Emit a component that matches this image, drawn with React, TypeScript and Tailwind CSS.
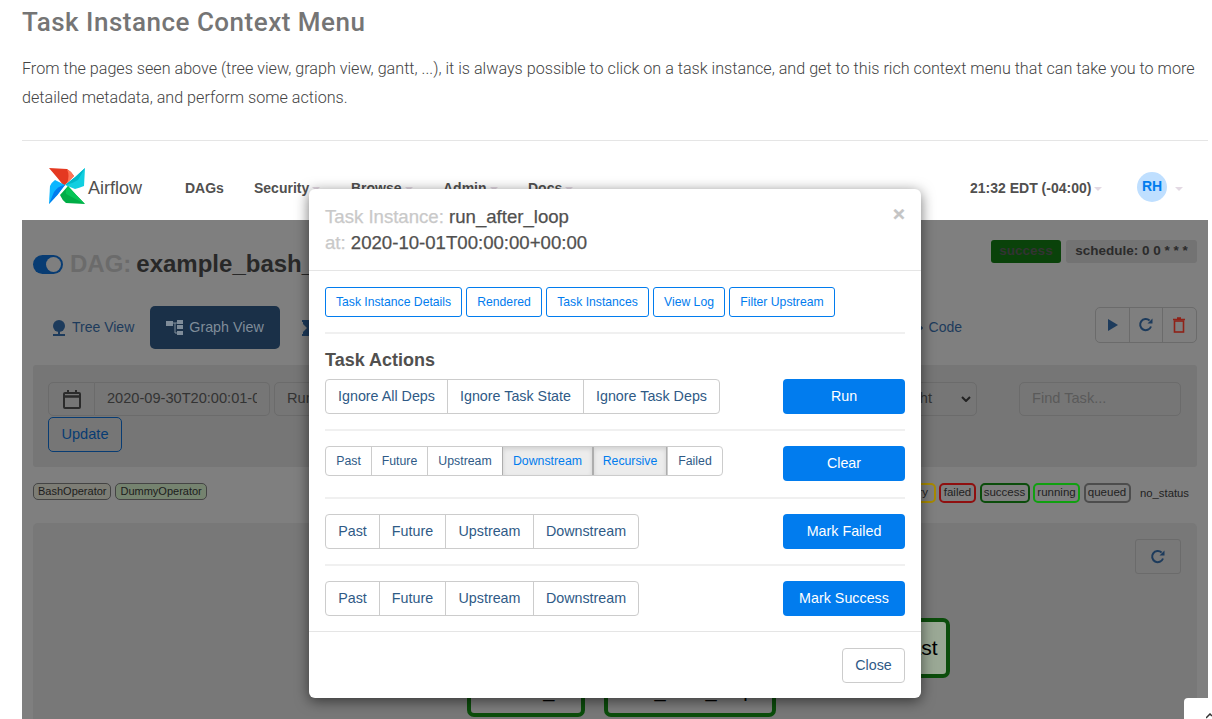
import React from "react";

const Caret = () => (
  <span className="ml-[3px] inline-block h-0 w-0 border-x-[4px] border-t-[4px] border-x-transparent border-t-[#e3d9e3] align-middle" />
);

const NavItem = ({ label, caret, width }: { label: string; caret?: boolean; width: string }) => (
  <span className={`${width} shrink-0 whitespace-nowrap text-[14px] font-bold text-[#51504f]`}>
    {label}
    {caret && <Caret />}
  </span>
);

const Pinwheel = () => (
  <svg width="37" height="37" viewBox="0 0 37 37" className="block shrink-0">
    <path d="M1 0 L19 1 Q24 4 26 8 L16 18 Q8 8 1 0 Z" fill="#e43921" />
    <path d="M19 1 Q24 4 26 8 L19 15 Q22 8 19 1 Z" fill="#ff7557" />
    <path d="M37 0 L36 18 Q31 20 27 21 L17 17 Q28 9 37 0 Z" fill="#11cfe0" />
    <path d="M37 0 Q28 9 17 17 Q24 16 30 12 Z" fill="#00b8c9" />
    <path d="M37 36 L18 35 Q14 32 12 27 L20 18 Q28 27 37 36 Z" fill="#00ad46" />
    <path d="M37 36 Q28 27 20 18 Q17 22 18 26 Z" fill="#04c455" />
    <path d="M1 36 L2 18 Q4 14 7 12 L17 17 Q10 27 1 36 Z" fill="#0cb6ff" />
    <path d="M1 36 Q10 27 17 17 Q10 18 6 24 Z" fill="#017cee" />
  </svg>
);

const Legend = ({ label, border, w }: { label: string; border: string; w: string }) => (
  <span className={`${border} ${w} flex h-[20px] shrink-0 items-center justify-center rounded-[5px] border-2 text-[11.5px] text-[#222]`}>
    {label}
  </span>
);

const Group = ({
  items,
  size,
}: {
  items: { t: string; on?: boolean; w: string }[];
  size: "sm" | "md";
}) => (
  <div className={`flex rounded-[4px] border border-[#ccc] ${size === "sm" ? "h-[30px] text-[12.3px]" : "h-[35px] text-[14.3px]"}`}>
    {items.map((it, i) => (
      <span
        key={it.t}
        className={`flex items-center justify-center pt-px ${it.w} ${i > 0 ? "border-l border-[#ccc]" : ""} ${
          it.on
            ? "border-x border-x-[#adadad] bg-[#ececec] text-[#017cee] shadow-[inset_0_2px_4px_rgba(0,0,0,0.12)]"
            : "text-[#2f5a86]"
        }`}
      >
        {it.t}
      </span>
    ))}
  </div>
);

const ActionBtn = ({ label }: { label: string }) => (
  <span className="flex h-[35px] w-[122px] shrink-0 items-center justify-center rounded-[4px] bg-[#017cee] pt-px text-[14.3px] text-white">
    {label}
  </span>
);

const Hr = ({ cls }: { cls: string }) => <div className={`h-[2px] bg-[#f0f0f0] ${cls}`} />;

const ActionRow = ({ children, label, cls }: { children: React.ReactNode; label: string; cls: string }) => (
  <div className={`flex items-start justify-between ${cls}`}>
    {children}
    <ActionBtn label={label} />
  </div>
);

const LinkBtn = ({ label, w }: { label: string; w: string }) => (
  <span className={`flex h-[30px] ${w} items-center justify-center rounded-[3px] border border-[#017cee] text-[12.2px] text-[#017cee]`}>
    {label}
  </span>
);

const Refresh = ({ c = "#1d3b5c" }: { c?: string }) => (
  <svg width="16" height="16" viewBox="0 0 16 16" fill="none" stroke={c} strokeWidth="2">
    <path d="M13 9.5A5.6 5.6 0 1 1 11.6 3.5" />
    <path d="M14.5 1.5V6.5H9.5Z" fill={c} stroke="none" />
  </svg>
);

const MdItems = [
  { t: "Past", w: "w-[53px]" },
  { t: "Future", w: "w-[66px]" },
  { t: "Upstream", w: "w-[88px]" },
  { t: "Downstream", w: "w-[105px]" },
];

const Modal = () => (
  <div className="absolute left-[309px] top-[189px] h-[509px] w-[612px] rounded-[6px] bg-white font-['Liberation_Sans',sans-serif] shadow-[0_3px_14px_rgba(0,0,0,0.55)]">
    <div className="relative h-[82px] border-b border-[#e5e5e5] px-[16px] pt-[15px] text-[18.6px] leading-[26px] text-[#51504f] [-webkit-text-stroke:0.25px]">
      <div className="whitespace-nowrap">
        <span className="text-[#c9c9c9]">Task Instance: </span>run_after_loop
      </div>
      <div className="whitespace-nowrap">
        <span className="text-[#c9c9c9]">at: </span>2020-10-01T00:00:00+00:00
      </div>
      <span className="absolute right-[16px] top-[12px] text-[21px] font-bold leading-[26px] text-[#c4c4c4]">×</span>
    </div>
    <div className="h-[360px] px-[16px]">
      <div className="flex gap-[4px] pt-[16px]">
        <LinkBtn label="Task Instance Details" w="w-[137px]" />
        <LinkBtn label="Rendered" w="w-[76px]" />
        <LinkBtn label="Task Instances" w="w-[103px]" />
        <LinkBtn label="View Log" w="w-[72px]" />
        <LinkBtn label="Filter Upstream" w="w-[106px]" />
      </div>
      <Hr cls="mt-[15px]" />
      <div className="mt-[16px] text-[18px] font-bold leading-[20px] text-[#51504f]">Task Actions</div>
      <ActionRow label="Run" cls="mt-[9px]">
        <Group
          size="md"
          items={[
            { t: "Ignore All Deps", w: "w-[121px]" },
            { t: "Ignore Task State", w: "w-[136px]" },
            { t: "Ignore Task Deps", w: "w-[136px]" },
          ]}
        />
      </ActionRow>
      <Hr cls="mt-[15px]" />
      <ActionRow label="Clear" cls="mt-[15px]">
        <Group
          size="sm"
          items={[
            { t: "Past", w: "w-[45px]" },
            { t: "Future", w: "w-[56px]" },
            { t: "Upstream", w: "w-[75px]" },
            { t: "Downstream", w: "w-[91px]", on: true },
            { t: "Recursive", w: "w-[74px]", on: true },
            { t: "Failed", w: "w-[55px]" },
          ]}
        />
      </ActionRow>
      <Hr cls="mt-[16px]" />
      <ActionRow label="Mark Failed" cls="mt-[15px]">
        <Group size="md" items={MdItems} />
      </ActionRow>
      <Hr cls="mt-[15px]" />
      <ActionRow label="Mark Success" cls="mt-[15px]">
        <Group size="md" items={MdItems} />
      </ActionRow>
    </div>
    <div className="flex justify-end border-t border-[#e5e5e5] px-[16px] pt-[16px]">
      <span className="flex h-[35px] w-[63px] items-center justify-center rounded-[4px] border border-[#ccc] text-[14.3px] text-[#2f5a86]">
        Close
      </span>
    </div>
  </div>
);

const Node = ({ label, cls }: { label: string; cls: string }) => (
  <div className={`absolute flex h-[60px] items-center justify-center whitespace-nowrap rounded-[7px] border-[4px] border-[#0b4d0b] text-black ${cls}`}>
    {label}
  </div>
);

const Dashboard = () => (
  <div className="h-[499px] overflow-hidden bg-[#7f7f7f] px-[11px] font-['Liberation_Sans',sans-serif]">
    <div className="flex h-[61px] items-start justify-between">
      <div className="mt-[30px] flex items-center">
        <span className="flex h-[19px] w-[30px] items-center justify-end rounded-full bg-[#083c73] pr-[2px]">
          <span className="h-[15px] w-[15px] rounded-full bg-[#7f7f7f]" />
        </span>
        <span className="ml-[7px] text-[24px] font-bold leading-[28px] text-[#6b6b6b]">DAG:</span>
        <span className="ml-[5px] text-[24px] font-bold leading-[28px] text-[#282828]">example_bash_operator</span>
      </div>
      <div className="mt-[20px] flex gap-[5px] text-[13.5px] font-bold">
        <span className="flex h-[23px] w-[70px] items-center justify-center rounded-[3px] bg-[#0a420a] text-[#333]">success</span>
        <span className="flex h-[23px] w-[131px] items-center justify-center rounded-[3px] bg-[#737373] text-[#2b2b2b]">schedule: 0 0 * * *</span>
      </div>
    </div>
    <div className="mt-[25px] flex h-[43px] items-center justify-between">
      <div className="flex items-center text-[14px] text-[#1d3b5c]">
        <span className="flex w-[117px] items-center pl-[19px]">
          <svg width="14" height="16" viewBox="0 0 14 16" fill="#1d3b5c" className="mr-[6px]">
            <circle cx="7" cy="6" r="6" />
            <rect x="6" y="10" width="2" height="5" />
            <rect x="1" y="14" width="12" height="2" />
          </svg>
          Tree View
        </span>
        <span className="flex h-[43px] w-[130px] items-center justify-center rounded-[5px] bg-[#1a3048] text-[14.3px] text-[#7f8c99]">
          <svg width="17" height="15" viewBox="0 0 17 15" fill="#7f8c99" className="mr-[6px]">
            <rect x="0" y="1" width="7" height="5" />
            <rect x="11" y="0" width="6" height="4" />
            <rect x="11" y="5" width="6" height="4" />
            <rect x="11" y="11" width="6" height="4" />
            <path d="M7 3h4M9 3v10h2" stroke="#7f8c99" fill="none" />
          </svg>
          Graph View
        </span>
        <svg width="13" height="16" viewBox="0 0 13 16" fill="#1d3b5c" className="ml-[22px]">
          <path d="M0 0H13V2H12V4L8 8L12 12V14H13V16H0V14H1V12L5 8L1 4V2H0Z" />
        </svg>
      </div>
      <div className="flex items-start">
        <span className="flex items-center self-center text-[14px] text-[#1d3b5c]">
          <svg width="18" height="12" viewBox="0 0 18 12" fill="none" stroke="#1d3b5c" strokeWidth="1.6" className="mr-[6px]">
            <path d="M5 2L1 6L5 10M13 2L17 6L13 10M11 0L7 12" />
          </svg>
          <span className="mr-[133px]">Code</span>
        </span>
        <div className="mb-[6px] flex h-[36px] w-[102px] rounded-[5px] border border-[#6b6b6b]">
          <span className="flex w-1/3 items-center justify-center">
            <svg width="10" height="12" viewBox="0 0 10 12" fill="#1d3b5c"><path d="M0 0 L10 6 L0 12 Z" /></svg>
          </span>
          <span className="flex w-1/3 items-center justify-center border-x border-[#6b6b6b]"><Refresh /></span>
          <span className="flex w-1/3 items-center justify-center">
            <svg width="12" height="16" viewBox="0 0 12 16" fill="none" stroke="#8f2218" strokeWidth="1.6">
              <path d="M0 2.5H12M4 1h4" />
              <rect x="1.5" y="4" width="9" height="11" />
            </svg>
          </span>
        </div>
      </div>
    </div>
    <div className="mt-[16px] h-[102px] rounded-[3px] bg-[#767676] pl-[15px] pr-[16px] pt-[17px]">
      <div className="flex h-[34px] items-start justify-between">
        <div className="flex">
          <span className="flex h-[34px] w-[47px] items-center justify-center rounded-l-[5px] border border-[#6b6b6b]">
            <svg width="18" height="19" viewBox="0 0 18 19" fill="none" stroke="#2b2b2b" strokeWidth="2">
              <rect x="1" y="3" width="16" height="15" rx="1" />
              <path d="M1 6.5H17" strokeWidth="2.5" />
              <path d="M5 0v3M13 0v3" />
            </svg>
          </span>
          <span className="flex h-[34px] w-[175px] items-center overflow-hidden whitespace-nowrap rounded-r-[5px] border border-l-0 border-[#6b6b6b] pl-[12px] pr-[12px] text-[14.6px] text-[#333]">
            <span className="w-[150px] overflow-hidden">2020-09-30T20:00:01-04:00</span>
          </span>
          <span className="ml-[4px] flex h-[34px] w-[60px] items-center rounded-[5px] border border-[#6b6b6b] pl-[12px] text-[14.6px] text-[#333]">Run</span>
        </div>
        <div className="flex">
          <span className="flex h-[34px] w-[133px] items-center justify-between rounded-[5px] border border-[#6b6b6b] pl-[12px] pr-[5px] text-[14.6px] text-[#333]">
            Left &gt; Right
            <svg width="10" height="6" viewBox="0 0 10 6" fill="none" stroke="#222" strokeWidth="2"><path d="M1 1 L5 5 L9 1" /></svg>
          </span>
          <span className="ml-[42px] flex h-[34px] w-[162px] items-center rounded-[5px] border border-[#6b6b6b] pl-[12px] text-[14.6px] text-[#5a5a5a]">Find Task...</span>
        </div>
      </div>
      <span className="mt-px flex h-[35px] w-[74px] items-center justify-center rounded-[5px] border border-[#083c73] text-[14.6px] text-[#083c73]">Update</span>
    </div>
    <div className="mt-[16px] flex h-[20px] items-start justify-between">
      <div className="flex gap-[4px]">
        <span className="rounded-[5px] border border-[#444] bg-[#7d7d75] px-[4px] text-[11px] leading-[15px] text-[#1c1c1c]">BashOperator</span>
        <span className="rounded-[5px] border border-[#444] bg-[#75836f] px-[4px] text-[11px] leading-[15px] text-[#1c1c1c]">DummyOperator</span>
      </div>
      <div className="flex items-center gap-[3.5px] pr-[8px]">
        <Legend label="up_for_retry" border="border-[#a88a00]" w="w-[77px]" />
        <Legend label="failed" border="border-[#8f0f0f]" w="w-[37px]" />
        <Legend label="success" border="border-[#0b4d0b]" w="w-[50px]" />
        <Legend label="running" border="border-[#10a010]" w="w-[47px]" />
        <Legend label="queued" border="border-[#4d4d4d]" w="w-[47px]" />
        <span className="ml-[6px] text-[11.3px] text-[#222]">no_status</span>
      </div>
    </div>
    <div className="relative mt-[20px] h-[196px] rounded-t-[5px] bg-[#787878]">
      <div className="flex justify-end pr-[16px] pt-[16px]">
        <span className="flex h-[35px] w-[46px] items-center justify-center rounded-[3px] border border-[#6b6b6b]"><Refresh /></span>
      </div>
      <Node label="run_this_last" cls="left-[773px] top-[95px] w-[144px] bg-[#9aa895] text-[21px]" />
      <Node label="runme_0" cls="left-[434px] top-[134px] w-[118px] bg-[#7f7f7f] pt-[5px] text-[20px]" />
      <Node label="run_after_loop" cls="left-[571px] top-[134px] w-[172px] bg-[#7f7f7f] pt-[5px] text-[20px]" />
    </div>
  </div>
);

export default function App() {
  return (
    <div className="relative h-[719px] w-[1212px] overflow-hidden bg-white font-['Roboto',sans-serif]">
      <div className="px-[22px]">
        <h2 className="pt-[5px] text-[26px] font-medium leading-[34px] tracking-[0.5px] text-[#757575]">Task Instance Context Menu</h2>
        <p className="mt-[15px] w-[1186px] text-[16.15px] font-light leading-[29px] text-[#444]">
          From the pages seen above (tree view, graph view, gantt, ...), it is always possible to click on a task instance, and get to this rich context menu that can take you to more detailed metadata, and perform some actions.
        </p>
      </div>
      <div className="ml-[22px] mt-[28px] w-[1186px] border-t border-[#e5e5e5]">
        <div className="flex h-[79px] items-center pt-[16px] font-['Liberation_Sans',sans-serif]">
          <span className="-mt-[4px] ml-[26px]"><Pinwheel /></span>
          <span className="-mt-[2px] ml-[3px] w-[97px] pt-[1px] text-[18px] text-[#51504f]">Airflow</span>
          <NavItem label="DAGs" width="w-[69px]" />
          <NavItem label="Security" caret width="w-[97px]" />
          <NavItem label="Browse" caret width="w-[92px]" />
          <NavItem label="Admin" caret width="w-[85px]" />
          <NavItem label="Docs" caret width="w-[442px]" />
          <NavItem label="21:32 EDT (-04:00)" caret width="w-[167px]" />
          <span className="-mt-[4px] flex h-[30px] w-[30px] items-center justify-center rounded-full bg-[#bfdfff] text-[14px] font-bold text-[#017cee]">RH</span>
          <span className="ml-[5px]"><Caret /></span>
        </div>
        <Dashboard />
      </div>
      <Modal />
      <div className="absolute bottom-0 right-0 flex h-[21px] w-[28px] items-end justify-end rounded-tl-[4px] bg-white">
        <svg width="6" height="6" viewBox="0 0 6 6" fill="none" stroke="#333" strokeWidth="1.5"><path d="M0 5 L4 1 L6 3" /></svg>
      </div>
    </div>
  );
}
